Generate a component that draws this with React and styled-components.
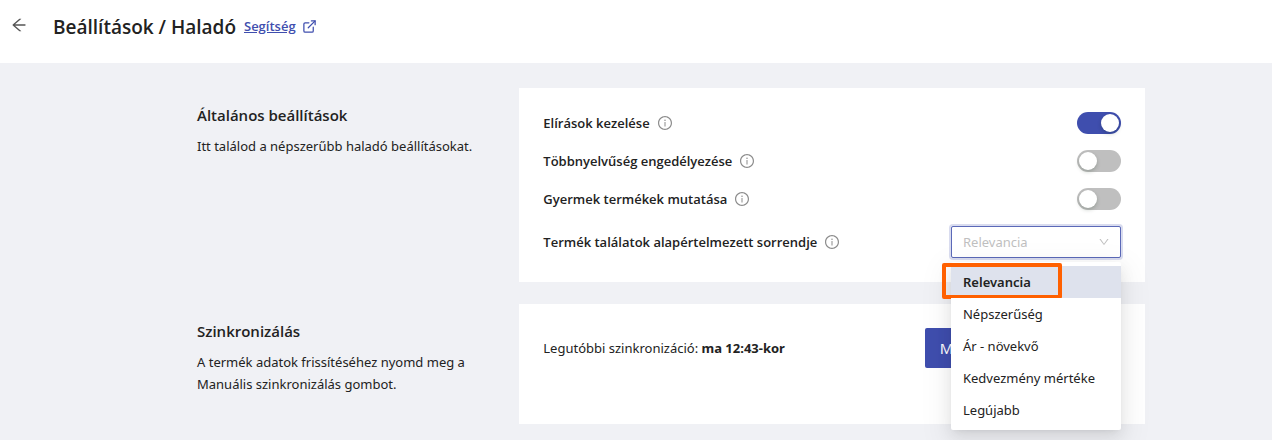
import { useState } from "react";
import styled, { createGlobalStyle } from "styled-components";
import {
  AiOutlineArrowLeft,
  AiOutlineDown,
  AiOutlineInfoCircle,
} from "react-icons/ai";
import { FiExternalLink } from "react-icons/fi";

const SWITCHES = [
  { id: "typos", label: "Elírások kezelése" },
  { id: "languages", label: "Többnyelvűség engedélyezése" },
  { id: "children", label: "Gyermek termékek mutatása" },
];

const ORDERS = [
  "Relevancia",
  "Népszerűség",
  "Ár - növekvő",
  "Kedvezmény mértéke",
  "Legújabb",
];

const OrderSelect = ({ id }) => {
  const [order, setOrder] = useState(ORDERS[0]);
  const [open, setOpen] = useState(true);

  const handlePick = (value) => {
    setOrder(value);
    setOpen(false);
  };

  return (
    <SelectWrapper>
      <Select
        id={id}
        value={order}
        onChange={(e) => handlePick(e.target.value)}
      >
        {ORDERS.map((item) => (
          <option key={item}>{item}</option>
        ))}
      </Select>
      <SelectArrow />
      {open && (
        <Menu role="listbox" aria-label="Sorrend">
          {ORDERS.map((item) => (
            <MenuItem
              key={item}
              role="option"
              aria-selected={item === order}
              $selected={item === order}
              onClick={() => handlePick(item)}
            >
              {item}
              {item === order && <Marker />}
            </MenuItem>
          ))}
        </Menu>
      )}
    </SelectWrapper>
  );
};

const App = () => {
  const [values, setValues] = useState({
    typos: true,
    languages: false,
    children: false,
  });

  const toggle = (id) => setValues({ ...values, [id]: !values[id] });

  return (
    <>
      <GlobalStyle />
      <Header>
        <BtnBack aria-label="Vissza">
          <AiOutlineArrowLeft size={18} />
        </BtnBack>
        <PageTitle>Beállítások / Haladó</PageTitle>
        <HelpLink href="#help">
          <span>Segítség</span>
          <FiExternalLink size={15} />
        </HelpLink>
      </Header>
      <Main>
        <Section>
          <Intro>
            <SectionTitle>Általános beállítások</SectionTitle>
            <Text>Itt találod a népszerűbb haladó beállításokat.</Text>
          </Intro>
          <Card>
            {SWITCHES.map(({ id, label }) => (
              <Row key={id}>
                <Label htmlFor={id}>
                  {label}
                  <InfoIcon />
                </Label>
                <Switch
                  id={id}
                  type="checkbox"
                  role="switch"
                  checked={values[id]}
                  onChange={() => toggle(id)}
                />
              </Row>
            ))}
            <Row>
              <Label htmlFor="order">
                Termék találatok alapértelmezett sorrendje
                <InfoIcon />
              </Label>
              <OrderSelect id="order" />
            </Row>
          </Card>
        </Section>
        <Section>
          <Intro>
            <SectionTitle>Szinkronizálás</SectionTitle>
            <Text>
              A termék adatok frissítéséhez nyomd meg a Manuális szinkronizálás
              gombot.
            </Text>
          </Intro>
          <Card>
            <Row>
              <Text>
                Legutóbbi szinkronizáció: <b>ma 12:43-kor</b>
              </Text>
              <BtnSync>Manuális szinkronizálás</BtnSync>
            </Row>
          </Card>
        </Section>
      </Main>
    </>
  );
};

const GlobalStyle = createGlobalStyle`
  * {
    box-sizing: border-box;
  }
  body {
    margin: 0;
    background-color: #f0f1f5;
    color: #222;
    font-family: "Segoe UI", "Noto Sans", "Open Sans", sans-serif;
    font-size: 13px;
    line-height: 22px;
  }
`;
const Header = styled.header`
  display: flex;
  align-items: center;
  padding: 12px 10px 21px;
  background-color: white;
`;
const BtnBack = styled.button`
  display: flex;
  margin: 0 25px 4px 0;
  padding: 0;
  border: none;
  background: none;
  color: #555;
  cursor: pointer;
`;
const PageTitle = styled.h1`
  margin: 0;
  font-family: "Segoe UI", "Open Sans", sans-serif;
  font-size: 19px;
  font-weight: 600;
  line-height: 30px;
`;
const HelpLink = styled.a`
  display: flex;
  align-items: center;
  gap: 6px;
  margin: 0 0 2px 8px;
  color: #3f4eae;
  font-family: "Segoe UI", "Open Sans", sans-serif;
  font-weight: 600;
  text-decoration: none;

  span {
    text-decoration: underline;
  }
`;
const Main = styled.main`
  display: flex;
  flex-direction: column;
  gap: 22px;
  padding: 25px 127px 16px 197px;
`;
const Section = styled.section`
  display: grid;
  grid-template-columns: 34% 66%;
`;
const Intro = styled.div`
  padding: 16px 40px 0 0;
`;
const SectionTitle = styled.h2`
  margin: 0 0 8px;
  font-family: "Segoe UI", "Open Sans", sans-serif;
  font-size: 15px;
  font-weight: 600;
  line-height: 23px;
`;
const Text = styled.p`
  margin: 0;
`;
const Card = styled.div`
  display: flex;
  flex-direction: column;
  gap: 16px;
  min-height: 120px;
  padding: 24px;
  background-color: white;
`;
const Row = styled.div`
  display: flex;
  align-items: center;
  justify-content: space-between;
`;
const Label = styled.label`
  display: flex;
  align-items: center;
  gap: 7px;
  font-family: "Segoe UI", "Open Sans", sans-serif;
  font-weight: 600;
`;
const InfoIcon = styled(AiOutlineInfoCircle)`
  width: 16px;
  height: 16px;
  color: #8c8c8c;
`;
const Switch = styled.input`
  appearance: none;
  display: flex;
  width: 44px;
  height: 22px;
  margin: 0;
  padding: 2px;
  border-radius: 11px;
  background-color: #bfbfbf;
  cursor: pointer;

  &::before {
    content: "";
    width: 18px;
    height: 18px;
    border-radius: 50%;
    background-color: white;
    box-shadow: 0 2px 4px rgba(0, 35, 11, 0.2);
  }
  &:checked {
    justify-content: flex-end;
    background-color: #3f4eae;
  }
`;
const SelectWrapper = styled.div`
  position: relative;
  width: 170px;
`;
const Select = styled.select`
  appearance: none;
  display: block;
  width: 100%;
  height: 32px;
  padding: 0 32px 0 11px;
  border: 1px solid #5b69b8;
  border-radius: 2px;
  outline: none;
  background-color: white;
  box-shadow: 0 0 0 2px rgba(63, 78, 174, 0.2);
  color: #bfbfbf;
  font: inherit;
`;
const SelectArrow = styled(AiOutlineDown)`
  position: absolute;
  top: 10px;
  right: 11px;
  width: 12px;
  height: 12px;
  color: #bfbfbf;
  pointer-events: none;
`;
const Menu = styled.ul`
  position: absolute;
  top: 36px;
  left: 0;
  right: 0;
  z-index: 1;
  margin: 0;
  padding: 4px 0;
  border-radius: 2px;
  background-color: white;
  box-shadow: 0 3px 6px -4px rgba(0, 0, 0, 0.12),
    0 6px 16px rgba(0, 0, 0, 0.08), 0 9px 28px 8px rgba(0, 0, 0, 0.05);
  list-style: none;
`;
const MenuItem = styled.li`
  position: relative;
  padding: 5px 12px;
  background-color: ${({ $selected }) => ($selected ? "#dee2ed" : "white")};
  font-weight: ${({ $selected }) => ($selected ? 600 : 400)};
  cursor: pointer;
`;
const Marker = styled.span`
  position: absolute;
  top: -3px;
  left: -9px;
  width: 120px;
  height: 36px;
  border: 4px solid #ff6000;
  border-radius: 2px;
`;
const BtnSync = styled.button`
  height: 40px;
  min-width: 196px;
  padding: 0 10px;
  border: none;
  border-radius: 2px;
  background-color: #3f4eae;
  color: white;
  font: inherit;
  font-size: 15px;
  cursor: pointer;
`;
export default App;
